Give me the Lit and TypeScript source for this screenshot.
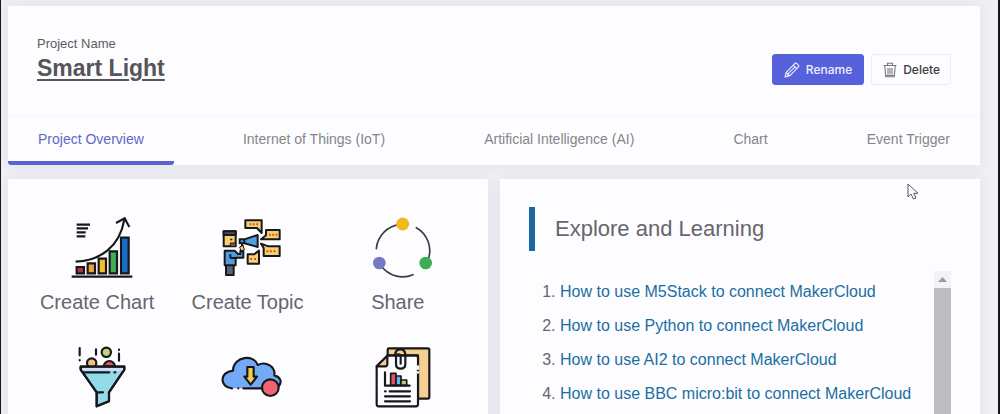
import { LitElement, html, css, nothing } from "lit";
import { customElement, property, state } from "lit/decorators.js";

const INK = "#17171d";

const chartIcon = html`<svg viewBox="-8 15 240 195" aria-hidden="true" fill="none" stroke=${INK} stroke-width="6.500">
  <path d="M51 44h40M51 55h34M51 67h27M51 79h26" />
  <path d="M36 200h182" />
  <path d="M48 155C120 152 180 112 194 28" />
  <path d="M169 39l26-14 14 26" />
  <path d="M51 171h22v19H51z" fill="#b8343f" />
  <path d="M84 160h22v30H84z" fill="#efa23a" />
  <path d="M117 146h22v44h-22z" fill="#f5bf2b" />
  <path d="M150 124h22v66h-22z" fill="#3fae55" />
  <path d="M184 83h23v107h-23z" fill="#1a6fc4" />
</svg>`;

const topicIcon = html`<svg viewBox="-6 15 240 195" aria-hidden="true" stroke=${INK} stroke-width="6" stroke-linejoin="round">
  <path d="M51 163h23v32H51z" fill="#5d6474" />
  <path d="M44 64h36v45H44z" fill="#f7cf6b" />
  <path d="M44 64h36v11H44z" fill="#4a4f5e" />
  <path d="M64 99h16v10H64z" fill="#8a5a33" stroke-width="3" />
  <path d="M67 86v5" />
  <path d="M92 111l10-6 4 14-10 5z" fill="#f7cf6b" stroke-width="3" />
  <path d="M47 122h30l10 10h7v-9h9v20H80v23H47z" fill="#4f9fe0" />
  <path d="M64 133v7q0 4 5 4h14" fill="none" />
  <path d="M92 88h14l40-13v36l-40-11H92z" fill="#4f9fe0" />
  <path d="M106 88v12M99 100v9" fill="none" />
  <path d="M109 31h49v38l-14-15h-35z" fill="#f7cf6b" />
  <path d="M171 60h41v28h-56l15-12z" fill="#f7cf6b" />
  <path d="M156 101l22 8h34v29h-48v-24z" fill="#f7cf6b" />
  <path d="M150 122v39h-34v-28h19z" fill="#f7cf6b" />
  <path d="M122 43h5M132 43h5M142 43h5M180 74h5M190 74h5M200 74h5M173 124h5M183 124h5M194 124h5M124 147h5M136 147h5" stroke="#c9423a" fill="none" />
</svg>`;

const shareIcon = html`<svg viewBox="-4 15 240 195" aria-hidden="true" fill="none" stroke="#3c3d48" stroke-width="5" stroke-linecap="round">
  <path d="M51 116A79 79 0 0 1 122 44" />
  <path d="M171 53A79 79 0 0 1 206 150" />
  <path d="M161 194A79 79 0 0 1 66 168" />
  <g stroke="none">
    <circle cx="130" cy="42" r="19.500" fill="#f1b91e" />
    <circle cx="60" cy="159" r="19" fill="#7479c4" />
    <circle cx="199" cy="159" r="19" fill="#3bae55" />
  </g>
</svg>`;

const funnelIcon = html`<svg viewBox="-8 33 240 195" aria-hidden="true" fill="none" stroke=${INK} stroke-width="6.500" stroke-linecap="round" stroke-linejoin="round">
  <path d="M60 42v22M60 78v1M109 46v16M178 47v1M178 59v21" />
  <circle cx="140" cy="55" r="14" fill="#bcd67a" />
  <circle cx="96" cy="87" r="14" fill="#f5c07a" />
  <path d="M132 98a17 17 0 0 1 34 0z" fill="#e8505b" />
  <path d="M63 98h131v9l-46 68v27l-37 15v-42L63 107z" fill="#93dbe8" />
  <path d="M67 101h123v9H67z" fill="#d5ddf5" stroke="none" />
  <path d="M63 98h131v9l-46 68v27l-37 15v-42L63 107z" />
  <path d="M72 115h77M164 115h3M112 175h18" />
</svg>`;

const cloudIcon = html`<svg viewBox="-6 33 240 195" aria-hidden="true" stroke=${INK} stroke-width="6.500" stroke-linecap="round" stroke-linejoin="round">
  <path d="M63 163C34 160 32 117 72 110C73 65 136 60 146 93C172 80 200 99 196 124C216 128 221 148 208 163z" fill="#74aaf5" stroke="none" />
  <path d="M69 163C32 161 29 114 72 110C73 65 136 60 146 93C172 80 200 99 196 124C214 129 219 142 211 154" fill="none" />
  <path d="M88 163h0M103 163h57" fill="none" />
  <path d="M115 99h19v29h10l-19 24-19-24h9z" fill="#f3d14e" />
  <circle cx="184" cy="161" r="25" fill="#ef6373" />
</svg>`;

const reportIcon = html`<svg viewBox="-4 33 240 195" aria-hidden="true" fill="none" stroke=${INK} stroke-width="6.500" stroke-linecap="round" stroke-linejoin="round">
  <path d="M85 64V47q0-4 4-4h116q5 0 5 5v141q0 5-5 5h-29V64z" fill="#f6cf93" />
  <path d="M84 65h86q6 0 6 6v140q0 6-6 6H58q-6 0-6-6V97z" fill="#fdfdff" />
  <path d="M84 65v26q0 6-6 6H52z" fill="#f6cf93" />
  <path d="M176 97v8M176 114v2" stroke="#fdfdff" />
  <path d="M107 62q2-16 16-16t15 16v28q0 14-14 14t-14-14V69q0-8 7-8t7 8v20" />
  <path d="M94 118h16v36H94z" fill="#e8505b" stroke-width="5" />
  <path d="M110 126h15v28h-15z" fill="#5eb8ee" stroke-width="5" />
  <path d="M125 138h17v16h-17z" fill="#bfd16a" stroke-width="5" />
  <path d="M77 115v40h74M77 172h2M91 172h61M77 187h75M77 202h75" />
</svg>`;

const pencilIcon = html`<svg class="glyph" viewBox="0 0 16 16" aria-hidden="true" fill="none" stroke="currentColor" stroke-width="1.100" stroke-linejoin="round">
  <path d="M1 15l1.200-4.700L10.800 1.700q1-1 2.100 0l1.400 1.400q1 1.100 0 2.100L5.700 13.800zM2.200 10.300l3.500 3.500M9.300 3.200l3.500 3.500M4 11.900l7-7M3 12.600l1.200 1.200" />
</svg>`;

const trashIcon = html`<svg class="glyph" viewBox="0 0 16 16" aria-hidden="true" fill="none" stroke="currentColor" stroke-width="1.100">
  <path d="M1.500 3.500h13M5.500 3.300V1.300h5v2M2.800 3.700l.9 11h8.600l.9-11M6 6v6.500M8 6v6.500M10 6v6.500M3.800 13.500h8.400" />
</svg>`;

const actions = [
  { name: "Create Chart", caption: true, icon: chartIcon },
  { name: "Create Topic", caption: true, icon: topicIcon },
  { name: "Share", caption: true, icon: shareIcon },
  { name: "Filter", caption: false, icon: funnelIcon },
  { name: "Download", caption: false, icon: cloudIcon },
  { name: "Report", caption: false, icon: reportIcon },
];

const tabs = [
  "Project Overview",
  "Internet of Things (IoT)",
  "Artificial Intelligence (AI)",
  "Chart",
  "Event Trigger",
];

const guides = ["M5Stack", "Python", "AI2", "BBC micro:bit"];

@customElement("project-header")
class ProjectHeader extends LitElement {
  @property() name = "";
  @state() private active = 0;

  static styles = css`
    :host {
      display: block;
      background: #fdfdff;
      box-shadow: 0 0 13px rgba(82, 63, 105, 0.08);
    }
    .top {
      display: flex;
      justify-content: space-between;
      align-items: flex-end;
      padding: 30px 29px;
    }
    .caption {
      margin: 0 0 2px;
      font-size: 13px;
      line-height: 16px;
      color: #5b5b62;
    }
    .title {
      margin: 0 0 3px;
      font-size: 23px;
      line-height: 28px;
      font-weight: 700;
      text-decoration: underline;
      text-decoration-thickness: 2px;
      text-underline-offset: 3px;
      color: #55555b;
    }
    .buttons {
      display: flex;
      gap: 7px;
    }
    .button {
      display: flex;
      align-items: center;
      gap: 5px;
      height: 31px;
      padding: 0 10px;
      border: 1px solid #ebebf2;
      border-radius: 3px;
      background: #fdfdff;
      color: #3b3b42;
      font: 500 12px/18px Inter, sans-serif;
      cursor: pointer;
    }
    .button .glyph {
      color: #77777d;
    }
    .primary {
      padding: 0 11px;
      gap: 6px;
      border-color: #5661db;
      background: #5661db;
      color: #eef0ff;
    }
    .primary .glyph {
      color: #eef0ff;
    }
    .glyph {
      width: 16px;
      height: 16px;
    }
    .tabs {
      display: flex;
      justify-content: space-between;
      border-top: 1px solid #f7f7fa;
    }
    .tab {
      height: 49px;
      padding: 1px 30px 0;
      border: 0;
      border-bottom: 4px solid transparent;
      background: none;
      color: #85858b;
      font: 14px/20px "Liberation Sans", Arial, sans-serif;
      white-space: nowrap;
      cursor: pointer;
    }
    .tab[aria-selected="true"] {
      border-bottom-color: #5b62d6;
      border-radius: 0 0 3px 3px;
      color: #6068c6;
    }
  `;

  render() {
    return html`
      <div class="top">
        <div>
          <p class="caption">Project Name</p>
          <h1 class="title">${this.name}</h1>
        </div>
        <div class="buttons">
          <button class="button primary">${pencilIcon}Rename</button>
          <button class="button">${trashIcon}Delete</button>
        </div>
      </div>
      <div class="tabs" role="tablist">
        ${tabs.map(
          (tab, i) => html`<button
            class="tab"
            role="tab"
            aria-selected=${i === this.active ? "true" : "false"}
            @click=${() => (this.active = i)}
          >${tab}</button>`
        )}
      </div>
    `;
  }
}

@customElement("action-grid")
class ActionGrid extends LitElement {
  static styles = css`
    :host {
      display: block;
      background: #fdfdff;
      box-shadow: 0 0 13px rgba(82, 63, 105, 0.08);
    }
    .grid {
      display: grid;
      grid-template-columns: repeat(3, 1fr);
      row-gap: 31px;
      padding: 36px 15px 36px 14px;
    }
    .action {
      display: flex;
      flex-direction: column;
      align-items: center;
      gap: 10px;
      padding: 0;
      border: 0;
      background: none;
      color: #66666c;
      font: 20px/24px "Liberation Sans", Arial, sans-serif;
      cursor: pointer;
    }
    .action svg {
      width: 80px;
      height: 65px;
    }
  `;

  render() {
    return html`<div class="grid">
      ${actions.map(
        (a) => html`<button class="action" aria-label=${a.name}>
          ${a.icon}${a.caption ? html`<span>${a.name}</span>` : nothing}
        </button>`
      )}
    </div>`;
  }
}

@customElement("learning-panel")
class LearningPanel extends LitElement {
  static styles = css`
    :host {
      display: block;
      background: #fdfdff;
      box-shadow: 0 0 13px rgba(82, 63, 105, 0.08);
    }
    .panel {
      padding: 28px 29px;
    }
    .heading {
      margin: 0 0 20px;
      padding-left: 20px;
      border-left: 6px solid #17699f;
      font-size: 22px;
      line-height: 44px;
      font-weight: 400;
      color: #66666c;
    }
    .scroller {
      display: flex;
      justify-content: space-between;
      height: 240px;
    }
    .list {
      margin: 0;
      padding: 4px 0 0 31px;
      font-size: 16px;
      line-height: 34px;
      color: #66666c;
      white-space: nowrap;
    }
    .link {
      color: #1b6ea3;
      text-decoration: none;
    }
    .bar {
      display: flex;
      flex-direction: column;
      width: 17px;
      background: #bdbdbf;
    }
    .up {
      display: flex;
      align-items: center;
      justify-content: center;
      height: 17px;
      background: #f3f3f5;
    }
    .up svg {
      width: 9px;
      height: 5px;
    }
  `;

  render() {
    return html`<div class="panel">
      <h2 class="heading">Explore and Learning</h2>
      <div class="scroller">
        <ol class="list">
          ${guides.map((g) => html`<li><a class="link" href="#">How to use ${g} to connect MakerCloud</a></li>`)}
        </ol>
        <div class="bar" aria-hidden="true">
          <div class="up"><svg viewBox="0 0 9 5"><path d="M0 5l4.500-5L9 5z" fill="#9a9a9d" /></svg></div>
        </div>
      </div>
    </div>`;
  }
}

@customElement("app-root")
class AppRoot extends LitElement {
  static styles = css`
    :host {
      display: block;
      box-sizing: border-box;
      height: 100vh;
      overflow: hidden;
      border: 0 solid #17171b;
      border-width: 0 2px 0 1px;
      background: #efeff5;
      font-family: "Liberation Sans", Arial, sans-serif;
    }
    .page {
      display: flex;
      flex-direction: column;
      gap: 14px;
      padding: 6px 18px 14px 7px;
    }
    .columns {
      display: grid;
      grid-template-columns: 1fr 1fr;
      gap: 12px;
    }
    .cursor {
      position: absolute;
      left: 907px;
      top: 183px;
      width: 12px;
      height: 17px;
    }
  `;

  render() {
    return html`
      <main class="page">
        <project-header name="Smart Light"></project-header>
        <div class="columns">
          <action-grid></action-grid>
          <learning-panel></learning-panel>
        </div>
      </main>
      <svg class="cursor" viewBox="0 0 12 17" aria-hidden="true">
        <path d="M1 1v13l3-3 2.500 5 2.500-1-2.300-4.700H11z" fill="#fff" stroke="#55555b" stroke-width="1" />
      </svg>
    `;
  }
}
